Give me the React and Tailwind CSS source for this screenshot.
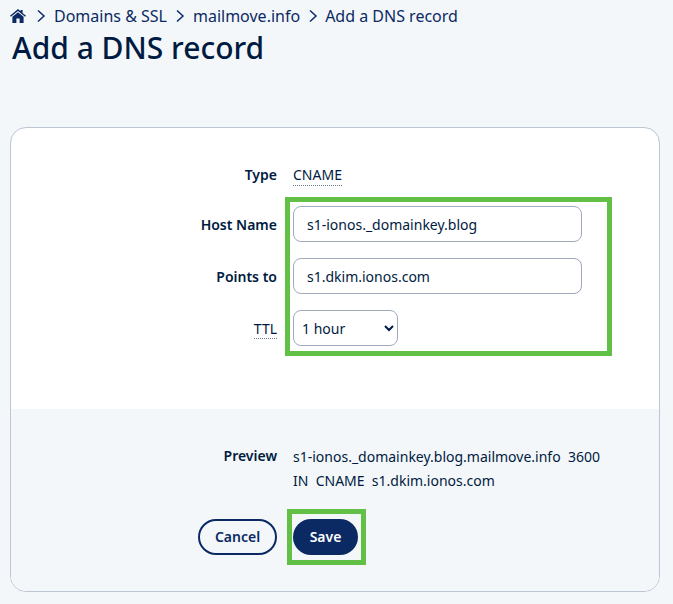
const labelClass = "w-[266px] shrink-0 text-right text-sm font-semibold text-[#001b41]";

const Chevron = () => (
  <svg className="mx-[8px] h-[14px] w-[10px]" viewBox="0 0 10 14" fill="none" stroke="#0b2a63" strokeWidth="1.5">
    <path d="M2 1.5 L8 7 L2 12.5" />
  </svg>
);

const HomeIcon = () => (
  <svg className="mr-[2px] h-[14px] w-4" viewBox="0 0 16 14" fill="#0b2a63">
    <path d="M8 0 L10.6 2.2 V1 H12.6 V3.9 L16 6.8 L15.1 7.8 L8 1.9 L0.9 7.8 L0 6.8 Z" />
    <path d="M8 3.2 L13.6 7.8 V14 H9.6 V9.6 H6.4 V14 H2.4 V7.8 Z" />
  </svg>
);

const Row = ({ label, className = "", children }) => (
  <div className={`flex items-center gap-4 ${className}`}>
    {label}
    {children}
  </div>
);

const App = () => {
  return (
    <div className="relative h-[604px] w-[673px] overflow-hidden bg-[#f4f7fa] font-['Noto_Sans',sans-serif] text-[#001b41]">
      {/* Breadcrumb */}
      <nav className="flex h-[32px] items-center pl-[10px] text-base text-[#0b2a63]">
        <HomeIcon />
        <Chevron />
        <span>Domains &amp; SSL</span>
        <Chevron />
        <span>mailmove.info</span>
        <Chevron />
        <span className="-ml-px">Add a DNS record</span>
      </nav>
      <h1 className="-mt-px pl-3 text-[30px] leading-[34px] font-medium text-[#001b41]">Add a DNS record</h1>

      {/* Card */}
      <div className="mt-[62px] ml-[10px] h-[465px] w-[650px] overflow-hidden rounded-[16px] border border-[#bcc6d4] bg-white">
        <div className="h-[281px] pt-[35px]">
          <Row label={<span className={labelClass}>Type</span>} className="h-[24px]">
            <span className="border-b border-dotted border-[#6b7a90] text-sm leading-[20px]">CNAME</span>
          </Row>
          <Row label={<label className={`${labelClass} pt-[2px]`}>Host Name</label>} className="mt-[19px]">
            <input
              readOnly
              value="s1-ionos._domainkey.blog"
              className="h-[36px] w-[289px] rounded-lg border border-[#a0aabb] bg-white px-[13px] text-sm text-[#001b41]"
            />
          </Row>
          <Row label={<label className={`${labelClass} pt-[2px]`}>Points to</label>} className="mt-4">
            <input
              readOnly
              value="s1.dkim.ionos.com"
              className="h-[36px] w-[289px] rounded-lg border border-[#a0aabb] bg-white px-[13px] text-sm text-[#001b41]"
            />
          </Row>
          <Row
            label={
              <span className="w-[266px] shrink-0 pt-[2px] text-right text-sm">
                <span className="border-b border-dotted border-[#6b7a90]">TTL</span>
              </span>
            }
            className="mt-4"
          >
            <select className="h-[36px] w-[105px] rounded-lg border border-[#a0aabb] bg-white pl-[4px] text-sm text-[#001b41]">
              <option>1 hour</option>
            </select>
          </Row>
        </div>

        <div className="h-[183px] bg-[#f4f7fa] pt-[36px]">
          <div className="flex items-start gap-4 text-sm leading-[24px]">
            <span className={`${labelClass} pt-px`}>Preview</span>
            <span className="w-[320px] whitespace-pre-wrap">
              {"s1-ionos._domainkey.blog.mailmove.info  3600\nIN  CNAME  s1.dkim.ionos.com"}
            </span>
          </div>
          <div className="mt-[26px] flex items-center gap-4 pl-[187px]">
            <button className="h-[36px] w-[79px] rounded-full border-2 border-[#0b2a63] text-sm font-semibold text-[#0b2a63]">
              Cancel
            </button>
            <button className="h-[36px] w-[65px] rounded-full bg-[#0b2a63] text-sm font-semibold text-white">Save</button>
          </div>
        </div>
      </div>

      {/* Green highlight boxes drawn over the form */}
      <div className="pointer-events-none absolute top-[197px] left-[285px] h-[159px] w-[327px] border-[5px] border-[#62c046]" />
      <div className="pointer-events-none absolute top-[509px] left-[287px] h-[56px] w-[79px] border-[5px] border-[#62c046]" />
    </div>
  );
};

export default App;
